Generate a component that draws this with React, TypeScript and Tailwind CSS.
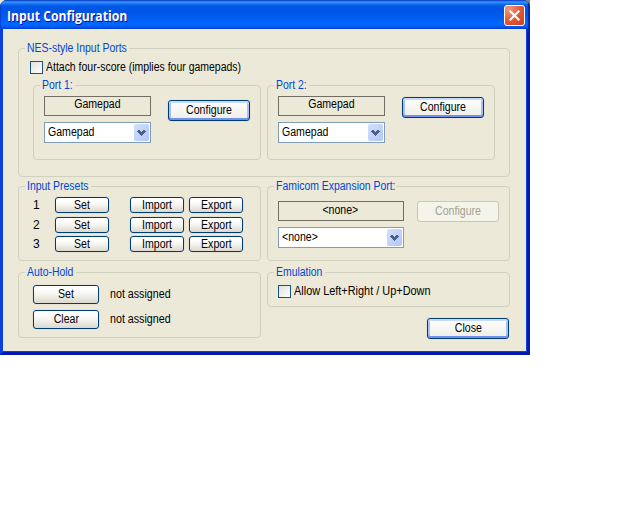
import type { ReactNode } from "react";

function Label({ children, className = "" }: { children: ReactNode; className?: string }) {
  return (
    <span className={`block w-max shrink-0 whitespace-nowrap leading-[13px] ${className}`}>{children}</span>
  );
}

function Group({ title, legend, className = "", children }: {
  title: string;
  legend: string;
  className?: string;
  children: ReactNode;
}) {
  return (
    <section className={`flex shrink-0 flex-col rounded-[4px] border border-[#d0d0bf] ${className}`}>
      <div className={`-mt-[7px] ml-[6px] h-[13px] shrink-0 bg-[#ece9d8] pl-[2px] text-[#0046d5] ${legend}`}>
        <Label className="origin-left scale-x-[0.87]">{title}</Label>
      </div>
      {children}
    </section>
  );
}

function Button({ children, className = "", focused = false, disabled = false }: {
  children: ReactNode;
  className?: string;
  focused?: boolean;
  disabled?: boolean;
}) {
  const look = disabled
    ? "border-[#c9c7ba] bg-[#f5f4ea] text-[#a1a192]"
    : focused
      ? "border-[#003c74] bg-linear-to-b from-white to-[#eeede6] shadow-[inset_0_2px_0_#c5dcff,inset_0_-2px_0_#7391ea,inset_2px_0_0_#a5c0f5,inset_-2px_0_0_#a5c0f5,0_0_0_1px_#e6e3d3]"
      : "border-[#003c74] bg-linear-to-b from-white from-20% via-[#f5f4ef] to-[#dcd8cf] shadow-[0_0_0_1px_#e5e1d2,1px_1px_0_0_#f7f5ec]";
  return (
    <button
      disabled={disabled}
      className={`flex shrink-0 items-center justify-center rounded-[3px] border ${look} ${className}`}
    >
      <Label className="scale-x-[0.88]">{children}</Label>
    </button>
  );
}

function Readout({ children, className = "" }: { children: ReactNode; className?: string }) {
  return (
    <div className={`flex h-5 justify-center border border-[#716f64] ${className}`}>
      <Label className="scale-x-[0.88]">{children}</Label>
    </div>
  );
}

function Select({ children, className = "" }: { children: ReactNode; className?: string }) {
  return (
    <div className={`flex h-[21px] items-center justify-between border border-[#7f9db9] bg-white pr-px pl-[3px] ${className}`}>
      <Label className="origin-left scale-x-[0.88]">{children}</Label>
      <span className="flex h-[17px] w-[15px] items-center justify-center rounded-[2px] bg-linear-to-br from-[#d3e0fd] to-[#b2c6f8]">
        <svg width="9" height="6" viewBox="0 0 9 6" shapeRendering="crispEdges" fill="#4d6185">
          <path d="M1 0h2v1h1v1h1V1h1V0h2v1h1v1H8v1H7v1H6v1H5v1H4V5H3V4H2V3H1V2H0V1h1z" />
        </svg>
      </span>
    </div>
  );
}

function CheckBox({ children, className = "", text }: { children: ReactNode; className?: string; text: string }) {
  return (
    <div className={`flex h-[13px] items-center gap-[3px] ${className}`}>
      <span className="size-[13px] shrink-0 border border-[#1c5180] bg-linear-to-br from-[#dfdfda] to-white" />
      <Label className={`origin-left ${text}`}>{children}</Label>
    </div>
  );
}

function Port({ title, button }: { title: string; button: string }) {
  return (
    <Group title={title} legend="w-[35px]" className="h-[75px] w-[228px]">
      <div className="mt-1 ml-[10px] flex gap-[17px]">
        <div className="flex w-[107px] flex-col gap-[6px]">
          <Readout className="pt-px">Gamepad</Readout>
          <Select>Gamepad</Select>
        </div>
        <Button focused className={`h-[21px] w-[82px] ${button}`}>Configure</Button>
      </div>
    </Group>
  );
}

function Preset({ n, className = "", number = "" }: { n: number; className?: string; number?: string }) {
  return (
    <div className={`flex h-4 items-center ${className}`}>
      <span className={`w-[22px] leading-[13px] ${number}`}>{n}</span>
      <Button className="h-4 w-[54px]">Set</Button>
      <Button className="ml-[21px] h-4 w-[54px]">Import</Button>
      <Button className="ml-[5px] h-4 w-[54px]">Export</Button>
    </div>
  );
}

export default function App() {
  return (
    <div className="h-[512px] w-[640px] overflow-hidden bg-white font-['Liberation_Sans',sans-serif] text-[12px] text-black">
      <div className="h-[355px] w-[530px] bg-linear-to-r from-[#ece9d8] to-[#808080]">
        <div className="flex h-[355px] w-[530px] flex-col overflow-hidden rounded-t-[7px] bg-[#0831d9]">
          <header className="flex h-[29px] shrink-0 items-start justify-between bg-[linear-gradient(to_bottom,#0a3fc4_0px,#3b93ff_2px,#1670f4_4px,#0058e6_6px,#0054e3_12px,#0061fb_20px,#0066ff_25px,#005bec_27px,#003dd7_29px)] pr-[5px] pl-[7px] shadow-[inset_-2px_0_1px_#0027a8,inset_1px_0_1px_#0b3fd0]">
            <h1 className="mt-[8px] origin-left scale-x-[0.87] text-[14px] leading-4 font-bold whitespace-nowrap text-white font-['Open_Sans',sans-serif] [text-shadow:1px_1px_0_#0f1089]">
              Input Configuration
            </h1>
            <span className="mt-[5px] flex size-[21px] items-center justify-center rounded-[3px] border border-white bg-[radial-gradient(circle_at_20%_15%,#ef9a83,#e35b3a_50%,#cf3c12)]">
              <svg width="11" height="11" viewBox="0 0 11 11" stroke="white" strokeWidth="2">
                <path d="M.7.7l9.6 9.6M10.3.7L.7 10.3" />
              </svg>
            </span>
          </header>

          <main className="flex h-[326px] flex-col border-x-[3px] border-b-[3px] border-[#0841e0] border-r-[#0019b0] border-b-[#0019b0] bg-[#ece9d8] pt-[19px] pl-[15px] shadow-[inset_0_-1px_0_#0841e0,inset_-1px_0_0_#0841e0]">
            <Group title="NES-style Input Ports" legend="w-[104px]" className="h-[129px] w-[492px]">
              <CheckBox className="mt-[6px] ml-[11px]" text="scale-x-[0.873]">
                Attach four-score (implies four gamepads)
              </CheckBox>
              <div className="mt-[11px] ml-[14px] flex gap-[6px]">
                <Port title="Port 1:" button="mt-1" />
                <Port title="Port 2:" button="mt-px" />
              </div>
            </Group>

            <div className="mt-[9px] flex gap-[6px]">
              <Group title="Input Presets" legend="w-[66px]" className="h-[75px] w-[243px]">
                <div className="mt-1 ml-[14px] flex flex-col">
                  <Preset n={1} number="pt-px" />
                  <Preset n={2} className="mt-1" />
                  <Preset n={3} className="mt-[3px]" />
                </div>
              </Group>
              <Group title="Famicom Expansion Port:" legend="w-[122px]" className="h-[75px] w-[243px]">
                <div className="mt-2 ml-[10px] flex gap-[13px]">
                  <div className="flex w-[126px] flex-col gap-[6px]">
                    <Readout className="pt-[2px] pr-px">&lt;none&gt;</Readout>
                    <Select>&lt;none&gt;</Select>
                  </div>
                  <Button disabled className="h-[21px] w-[82px]">Configure</Button>
                </div>
              </Group>
            </div>

            <div className="mt-[11px] flex gap-[6px]">
              <Group title="Auto-Hold" legend="w-[51px]" className="h-[66px] w-[243px]">
                <div className="mt-[6px] ml-[14px] flex flex-col gap-[6px]">
                  {["Set", "Clear"].map((action) => (
                    <div key={action} className="flex h-[19px] items-center gap-[11px]">
                      <Button className="h-[19px] w-[66px]">{action}</Button>
                      <Label className="origin-left scale-x-[0.89]">not assigned</Label>
                    </div>
                  ))}
                </div>
              </Group>
              <div className="flex w-[243px] flex-col">
                <Group title="Emulation" legend="w-[51px]" className="h-[35px] w-[243px]">
                  <CheckBox className="mt-[6px] ml-[10px]" text="scale-x-[0.91]">
                    Allow Left+Right / Up+Down
                  </CheckBox>
                </Group>
                <Button focused className="mt-[11px] mr-px h-[21px] w-[82px] self-end">Close</Button>
              </div>
            </div>
          </main>
        </div>
      </div>
    </div>
  );
}
